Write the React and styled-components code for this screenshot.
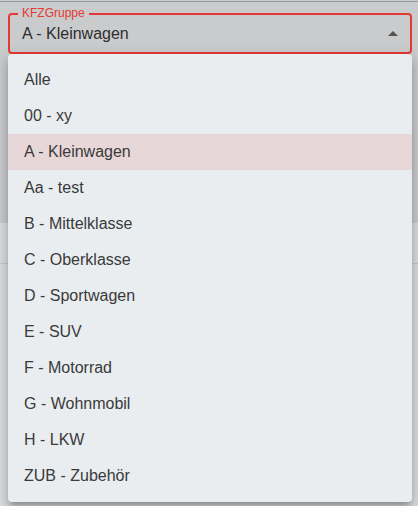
import styled, { createGlobalStyle } from "styled-components";

const GlobalStyle = createGlobalStyle`
  body {
    margin: 0;
    font-family: "Liberation Sans", Arial, sans-serif;
    background: #dcdddf;
  }
`;

const Page = styled.div`
  position: relative;
  width: 418px;
  height: 506px;
  overflow: hidden;
  background: #dcdddf;
`;

const TopBand = styled.div`
  height: 223px;
  box-sizing: border-box;
  padding-top: 1px;
  background: #cacbcd;
`;

const TopLine = styled.div`
  height: 1px;
  background: #98999b;
`;

const FieldArea = styled.div`
  padding: 11px 6px 0 8px;
`;

const Field = styled.div`
  position: relative;
  height: 41px;
  box-sizing: border-box;
  border: 2px solid #e53935;
  border-radius: 4px;
  display: flex;
  align-items: center;
  padding: 0 12px;
`;

const Label = styled.span`
  position: absolute;
  top: -8px;
  left: 8px;
  padding: 0 4px;
  background: #cacbcd;
  font-size: 12px;
  line-height: 12px;
  color: #e53935;
`;

const Value = styled.span`
  font-size: 16px;
  color: #2e2e2e;
  flex: 1;
`;

const Arrow = styled.svg`
  position: absolute;
  right: 5px;
  top: 50%;
  margin-top: -12px;
  width: 24px;
  height: 24px;
  fill: #555;
  transform: rotate(180deg);
`;

const LowerBand = styled.div`
  height: 40px;
  border-bottom: 1px solid #c6c7c9;
`;

const Menu = styled.ul`
  position: absolute;
  top: 54px;
  left: 8px;
  width: 404px;
  margin: 0;
  padding: 8px 0;
  list-style: none;
  box-sizing: border-box;
  background: #e9edf0;
  border-radius: 4px;
  box-shadow: 0px 5px 5px -3px rgba(0, 0, 0, 0.2),
    0px 8px 10px 1px rgba(0, 0, 0, 0.14), 0px 3px 14px 2px rgba(0, 0, 0, 0.12);
`;

const Item = styled.li`
  height: 36px;
  display: flex;
  align-items: center;
  padding: 0 16px;
  font-size: 16px;
  color: #3a3a3a;
  background: ${({ selected }) => (selected ? "#e8d7d8" : "transparent")};
`;

const options = [
  "Alle",
  "00 - xy",
  "A - Kleinwagen",
  "Aa - test",
  "B - Mittelklasse",
  "C - Oberklasse",
  "D - Sportwagen",
  "E - SUV",
  "F - Motorrad",
  "G - Wohnmobil",
  "H - LKW",
  "ZUB - Zubehör",
];

export default function App() {
  const value = "A - Kleinwagen";
  return (
    <>
      <GlobalStyle />
      <Page>
        <TopBand>
          <TopLine />
          <FieldArea>
            <Field>
              <Label>KFZGruppe</Label>
              <Value>{value}</Value>
              <Arrow viewBox="0 0 24 24">
                <path d="M7 10l5 5 5-5z" />
              </Arrow>
            </Field>
          </FieldArea>
        </TopBand>
        <LowerBand />
        <Menu>
          {options.map((o) => (
            <Item key={o} selected={o === value}>
              {o}
            </Item>
          ))}
        </Menu>
      </Page>
    </>
  );
}
